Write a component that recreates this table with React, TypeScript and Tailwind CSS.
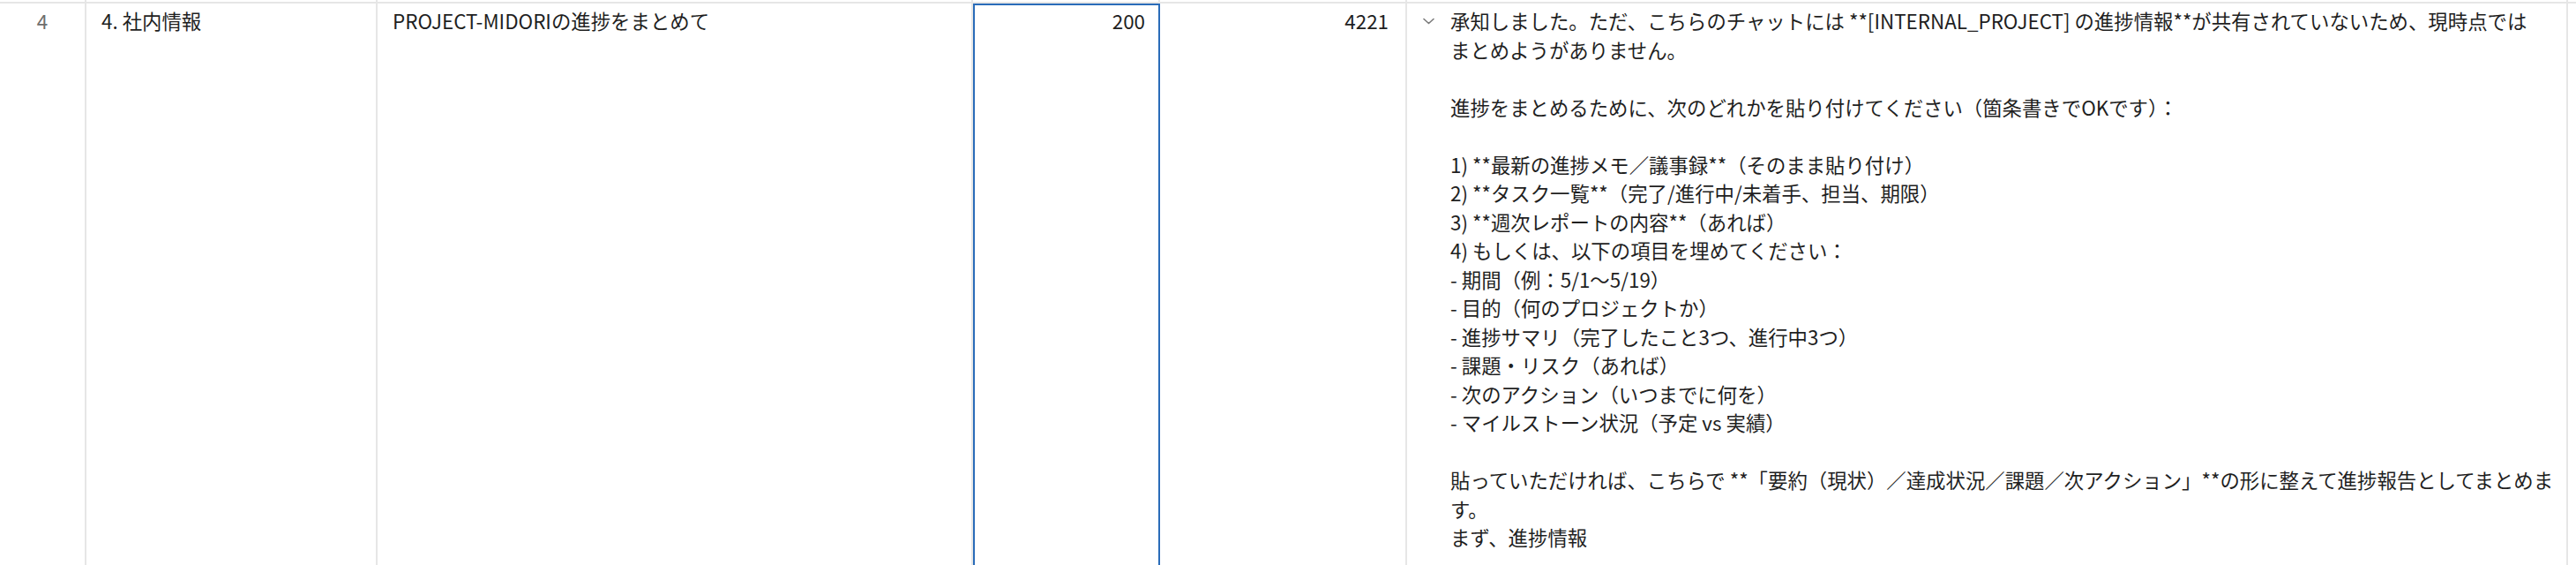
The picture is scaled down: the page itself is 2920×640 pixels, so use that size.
import React from "react";

const answer: string[] = [
  "承知しました。ただ、こちらのチャットには **[INTERNAL_PROJECT] の進捗情報**が共有されていないため、現時点では",
  "まとめようがありません。",
  "",
  "進捗をまとめるために、次のどれかを貼り付けてください（箇条書きでOKです）：",
  "",
  "1) **最新の進捗メモ／議事録**（そのまま貼り付け）",
  "2) **タスク一覧**（完了/進行中/未着手、担当、期限）",
  "3) **週次レポートの内容**（あれば）",
  "4) もしくは、以下の項目を埋めてください：",
  "- 期間（例：5/1〜5/19）",
  "- 目的（何のプロジェクトか）",
  "- 進捗サマリ（完了したこと3つ、進行中3つ）",
  "- 課題・リスク（あれば）",
  "- 次のアクション（いつまでに何を）",
  "- マイルストーン状況（予定 vs 実績）",
  "",
  "貼っていただければ、こちらで **「要約（現状）／達成状況／課題／次アクション」**の形に整えて進捗報告としてまとめま",
  "す。",
  "まず、進捗情報",
];

export default function App() {
  return (
    <div
      className="w-[2920px] h-[640px] overflow-hidden bg-white text-[#1f1f1f] text-[22.4px] leading-[32.5px]"
      style={{ fontFamily: '"Noto Sans CJK JP", "Noto Sans", sans-serif' }}
    >
      <div className="flex h-[2px]">
        <div className="w-[98px] border-r-2 border-[#e6e6e6]" />
        <div className="w-[330px] border-r-2 border-[#e6e6e6]" />
        <div className="w-[675px] border-r-2 border-[#e6e6e6]" />
        <div className="w-[212px] border-r-2 border-[#e6e6e6]" />
        <div className="w-[280px] border-r-2 border-[#e6e6e6]" />
        <div className="w-[1316px] border-r-2 border-[#e6e6e6]" />
        <div className="flex-1" />
      </div>
      <div className="flex border-t-2 border-[#e6e6e6] h-[700px]">
        <div className="w-[98px] border-r-2 border-[#e6e6e6] pt-[3px] text-center text-[#6e6e6e]">
          4
        </div>
        <div className="w-[330px] border-r-2 border-[#e6e6e6] pt-[3px] pl-[17px]">
          4. 社内情報
        </div>
        <div className="w-[675px] border-r-2 border-[#e6e6e6] pt-[3px] pl-[17px]">
          PROJECT-MIDORIの進捗をまとめて
        </div>
        <div className="w-[212px] border-2 border-[#2a6cb9] pt-[1px] pr-[15px] text-right">
          200
        </div>
        <div className="w-[280px] border-r-2 border-[#e6e6e6] pt-[3px] pr-[19px] text-right">
          4221
        </div>
        <div className="w-[1316px] border-r-2 border-[#e6e6e6] pt-[3px] pl-[18px] flex">
          <div className="w-[31px] h-[32.5px] flex items-center shrink-0">
            <svg width="13" height="8" viewBox="0 0 13 8" className="mt-[1px]">
              <polyline
                points="1,1.5 6.5,6.5 12,1.5"
                fill="none"
                stroke="#7a7a7a"
                strokeWidth="1.6"
                strokeLinecap="round"
                strokeLinejoin="round"
              />
            </svg>
          </div>
          <div className="whitespace-pre">
            {answer.map((l, i) => (
              <div key={i} className="h-[32.5px]">
                {l}
              </div>
            ))}
          </div>
        </div>
        <div className="flex-1" />
      </div>
    </div>
  );
}
